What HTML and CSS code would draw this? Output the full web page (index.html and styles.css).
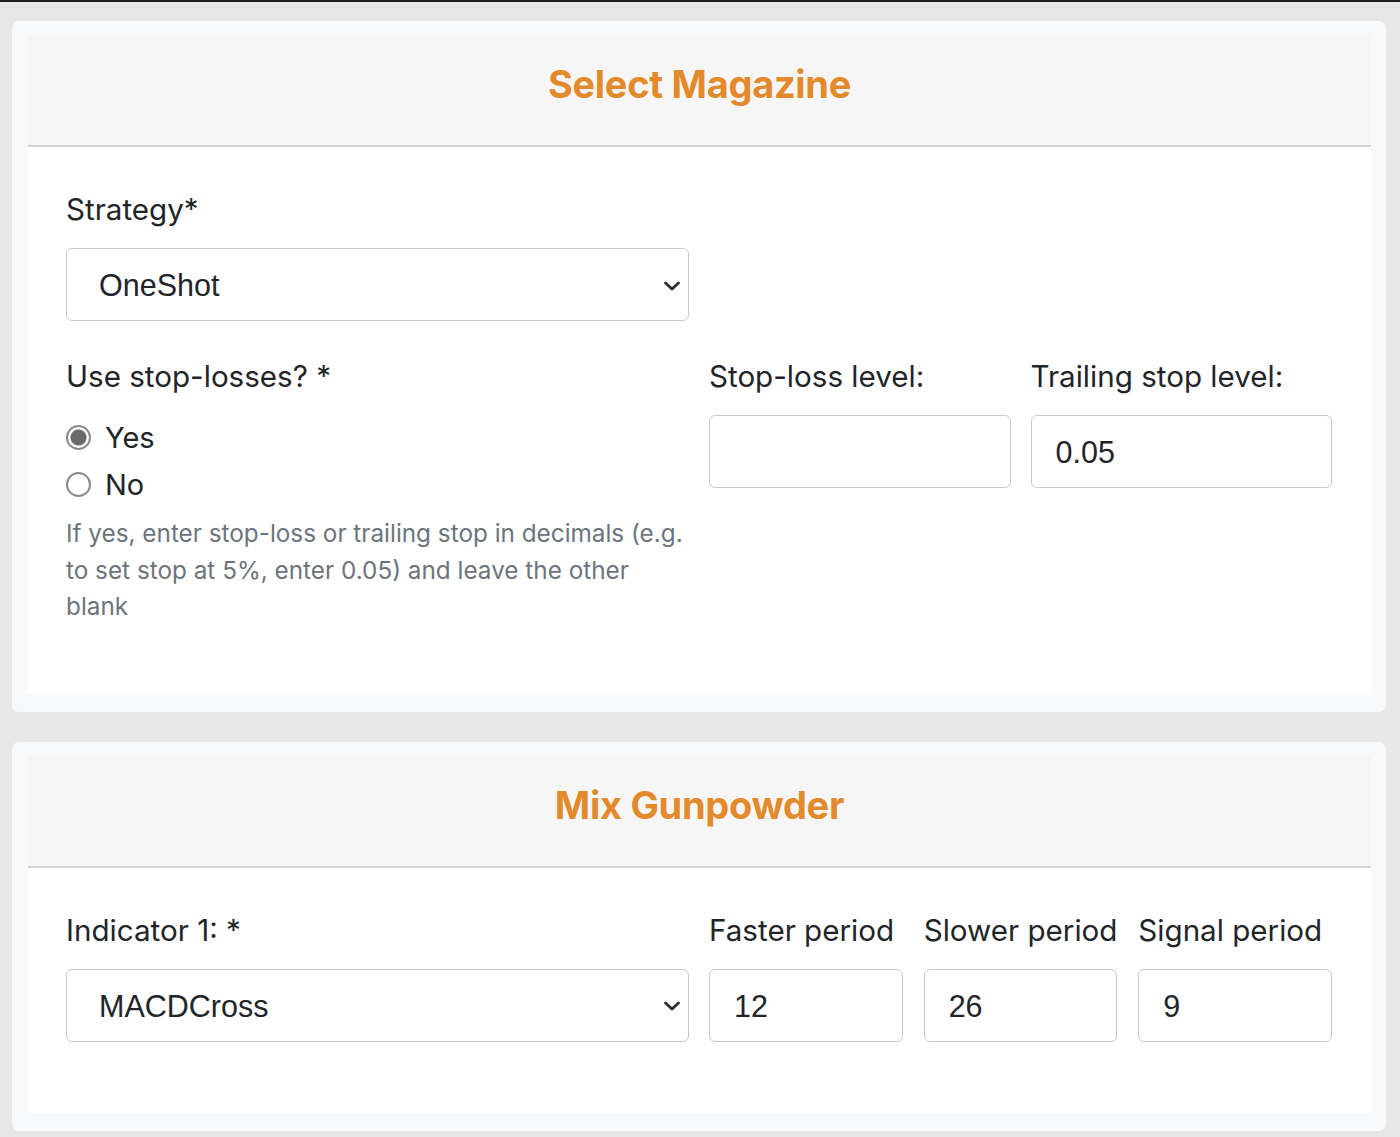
FILE: index.html
```html
<!DOCTYPE html>
<html lang="en">
<head>
<meta charset="utf-8">
<title>Select Magazine</title>
<link rel="stylesheet" href="styles.css">
</head>
<body>
<div class="topbar"></div>
<main class="page">
  <section class="panel">
    <div class="card">
      <header class="card-header"><h2 class="card-title">Select Magazine</h2></header>
      <div class="card-body">
        <div class="group">
          <label class="label">Strategy*</label>
          <div class="row2">
            <div class="select">
              <span class="select-value">OneShot</span>
              <svg class="chev" width="18" height="12" viewBox="0 0 18 12"><path d="M2.5 3 L9 9 L15.5 3" fill="none" stroke="#2a2a2a" stroke-width="2.8" stroke-linecap="round" stroke-linejoin="round"/></svg>
            </div>
            <div></div>
          </div>
        </div>
        <div class="group row2">
          <div class="col">
            <label class="label">Use stop-losses? *</label>
            <div class="radio"><span class="radio-dot checked"></span><span class="radio-text">Yes</span></div>
            <div class="radio"><span class="radio-dot"></span><span class="radio-text">No</span></div>
            <p class="help">If yes, enter stop-loss or trailing stop in decimals (e.g. to set stop at 5%, enter 0.05) and leave the other blank</p>
          </div>
          <div class="sub2">
            <div class="col">
              <label class="label">Stop-loss level:</label>
              <div class="input"></div>
            </div>
            <div class="col">
              <label class="label">Trailing stop level:</label>
              <div class="input">0.05</div>
            </div>
          </div>
        </div>
      </div>
    </div>
  </section>

  <section class="panel">
    <div class="card">
      <header class="card-header"><h2 class="card-title">Mix Gunpowder</h2></header>
      <div class="card-body">
        <div class="group row2">
          <div class="col">
            <label class="label">Indicator 1: *</label>
            <div class="select">
              <span class="select-value">MACDCross</span>
              <svg class="chev" width="18" height="12" viewBox="0 0 18 12"><path d="M2.5 3 L9 9 L15.5 3" fill="none" stroke="#2a2a2a" stroke-width="2.8" stroke-linecap="round" stroke-linejoin="round"/></svg>
            </div>
          </div>
          <div class="sub3">
            <div class="col">
              <label class="label">Faster period</label>
              <div class="input">12</div>
            </div>
            <div class="col">
              <label class="label">Slower period</label>
              <div class="input">26</div>
            </div>
            <div class="col">
              <label class="label">Signal period</label>
              <div class="input">9</div>
            </div>
          </div>
        </div>
      </div>
    </div>
  </section>
</main>
</body>
</html>
```

FILE: styles.css
```css
* { box-sizing: border-box; }
html, body { margin: 0; padding: 0; }
body {
  background: #e7e7e7;
  font-family: Inter, "Noto Sans", sans-serif;
  color: #212529;
}
.topbar { height: 2px; background: #1e1e1e; }
.page {
  padding: 19px 14px 0 12px;
  display: flex;
  flex-direction: column;
  gap: 30px;
}
.panel {
  background: #f8f9fb;
  border-radius: 7px;
  padding: 14px 15px 18px 16px;
}
.card { background: #fff; }
.card-header {
  height: 112px;
  background: #f6f6f6;
  border-bottom: 2px solid #d2d2d2;
  display: flex;
  align-items: center;
  justify-content: center;
  padding-bottom: 12px;
}
.card-title {
  margin: 0;
  font-size: 38px;
  font-weight: 700;
  color: #e38b2c;
  letter-spacing: -0.3px;
}
.card-body { padding: 41px 39px 37px 38px; }
.group { margin-bottom: 34px; }
.row2 {
  display: grid;
  grid-template-columns: 1fr 1fr;
  column-gap: 20px;
}
.sub2 { display: grid; grid-template-columns: 1fr 1fr; column-gap: 20px; }
.sub3 { display: grid; grid-template-columns: 1fr 1fr 1fr; column-gap: 21px; }
.col { display: flex; flex-direction: column; min-width: 0; }
.label {
  display: block;
  font-size: 29.6px;
  line-height: 43px;
  margin-bottom: 17px;
  white-space: nowrap;
}
.select, .input {
  height: 73px;
  border: 1.5px solid #c9c9c9;
  border-radius: 6px;
  background: #fff;
  font-family: "Liberation Sans", Arial, sans-serif;
  font-size: 30.5px;
  color: #212529;
  display: flex;
  align-items: center;
}
.select { padding: 2px 7px 0 32px; justify-content: space-between; }
.input { padding: 2px 24px 0; }
.chev { display: block; }
.radio {
  display: flex;
  align-items: center;
  height: 47px;
  gap: 14px;
}
.radio:first-of-type { margin-top: -1px; }
.radio-dot {
  width: 25px;
  height: 25px;
  border-radius: 50%;
  border: 2px solid #8a8a8a;
  background: #fff;
  flex: none;
}
.radio-dot.checked {
  background: radial-gradient(circle, #6a6a6a 0 7.5px, #fff 8.5px);
}
.radio-text { font-size: 29px; }
.help {
  margin: 7px 0 -2px;
  font-size: 24.3px;
  line-height: 36.5px;
  color: #6c757d;
}
```
